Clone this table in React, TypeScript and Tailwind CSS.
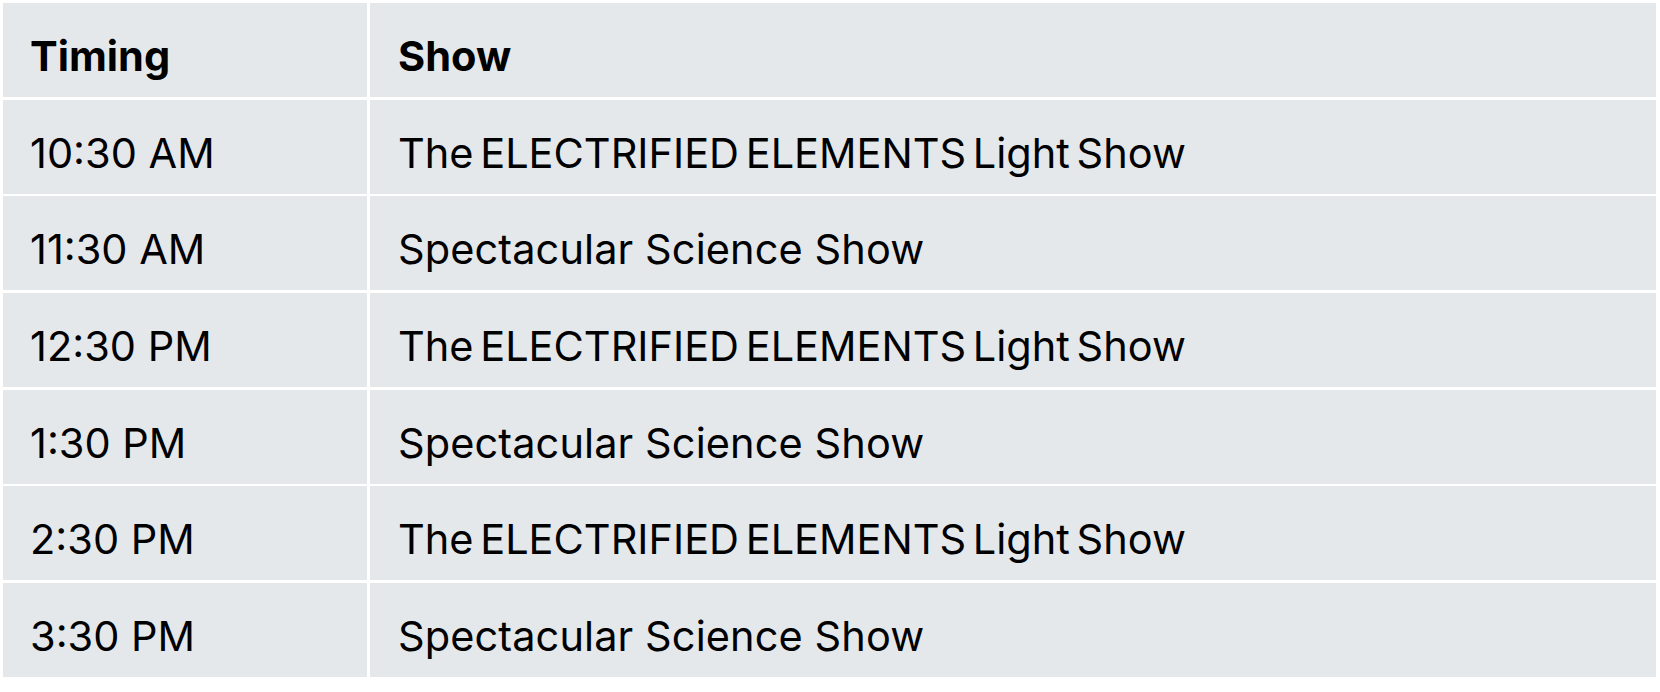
import React from "react";

const rows: [string, string][] = [
  ["10:30 AM", "The ELECTRIFIED ELEMENTS Light Show"],
  ["11:30 AM", "Spectacular Science Show"],
  ["12:30 PM", "The ELECTRIFIED ELEMENTS Light Show"],
  ["1:30 PM", "Spectacular Science Show"],
  ["2:30 PM", "The ELECTRIFIED ELEMENTS Light Show"],
  ["3:30 PM", "Spectacular Science Show"],
];

export default function App() {
  return (
    <div
      className="w-[1660px] h-[692px] bg-white text-black"
      style={{ fontFamily: "Inter, 'Noto Sans', sans-serif" }}
    >
      <div className="pl-[3px] pt-[3px] grid grid-cols-[364px_1286px] gap-x-[3px] gap-y-[2.7px] auto-rows-[94px]">
        <div className="bg-[#e5e8eb] flex items-center pl-[27px] pt-[12px] text-[41.5px] font-bold">
          Timing
        </div>
        <div className="bg-[#e5e8eb] flex items-center pl-[28px] pt-[12px] text-[41.5px] font-bold">
          Show
        </div>
        {rows.map(([t, s], i) => (
          <React.Fragment key={i}>
            <div className="bg-[#e5e8eb] flex items-center pl-[27px] pt-[12px] text-[41.5px]">
              {t}
            </div>
            <div
              className={
                s.startsWith("The")
                  ? "bg-[#e5e8eb] flex items-center pl-[28px] pt-[12px] text-[41.5px] [word-spacing:-5px]"
                  : "bg-[#e5e8eb] flex items-center pl-[28px] pt-[12px] text-[41.5px] tracking-[0.1px]"
              }
            >
              {s}
            </div>
          </React.Fragment>
        ))}
      </div>
    </div>
  );
}
